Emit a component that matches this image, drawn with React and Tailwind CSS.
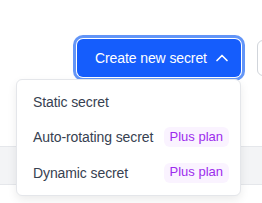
import { ChevronUp } from 'lucide-react';

const options = [
  { label: 'Static secret', plus: false },
  { label: 'Auto-rotating secret', plus: true },
  { label: 'Dynamic secret', plus: true },
];

export default function App() {
  return (
    <div className="w-[262px] h-[203px] overflow-hidden bg-white font-['Liberation_Sans',Arial,sans-serif]">
      <div className="flex items-start gap-4 pl-[77px] pt-[39px]">
        <div className="relative shrink-0">
          <button className="flex h-[38px] w-[164px] items-center rounded-md bg-[#155dfc] pl-[18px] pr-[9px] text-sm tracking-[-0.1px] text-white ring-[3px] ring-[#6395f7] ring-offset-1">
            Create new secret
            <ChevronUp size={20} strokeWidth={2} className="ml-auto" />
          </button>

          {/* Menu */}
          <div className="absolute right-0 top-[40px] z-10 w-[225px] rounded-md border border-[#e4e6ea] bg-white py-1 shadow-[0_4px_10px_rgba(0,0,0,0.08)]">
            {options.map((opt) => (
              <div key={opt.label} className="flex h-[35.5px] items-center justify-between pl-4 pr-[11px] text-sm tracking-[-0.1px] text-[#374151]">
                <span>{opt.label}</span>
                {opt.plus && (
                  <span className="flex h-5 items-center rounded-md bg-[#faf3ff] px-[6px] text-[13px] tracking-normal text-[#9d2ced]">
                    Plus plan
                  </span>
                )}
              </div>
            ))}
          </div>
        </div>
        <button className="h-9 w-24 shrink-0 mt-[1px] rounded-md border border-[#d1d5db] bg-white" />
      </div>

      <div className="mt-[69px] h-[39px] border-y border-[#e5e7eb] bg-[#f3f4f6]" />
    </div>
  );
}
